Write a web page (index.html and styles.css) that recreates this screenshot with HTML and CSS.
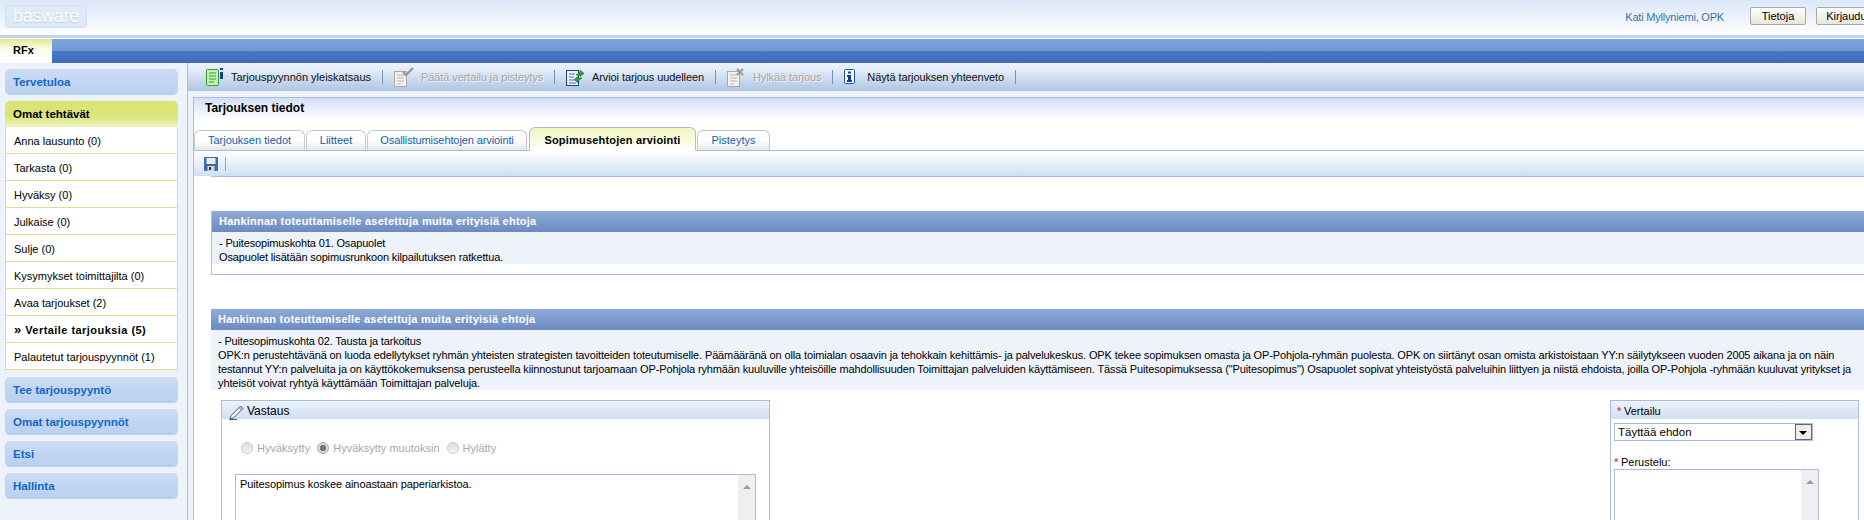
FILE: index.html
```html
<!DOCTYPE html>
<html lang="fi">
<head>
<meta charset="utf-8">
<title>RFx</title>
<link rel="stylesheet" href="styles.css">
</head>
<body>
<div class="page">
  <header class="top">
    <div class="logo"><span>basware</span></div>
    <div class="user">
      <span class="user-name">Kati Myllyniemi, OPK</span>
      <button class="btn">Tietoja</button>
      <button class="btn btn-out">Kirjaudu ulos</button>
    </div>
  </header>
  <nav class="nav"><div class="nav-tab">RFx</div></nav>
  <div class="main">
    <aside class="side">
      <div class="acc">Tervetuloa</div>
      <div class="acc-open">Omat tehtävät</div>
      <ul class="tasks">
        <li>Anna lausunto (0)</li>
        <li>Tarkasta (0)</li>
        <li>Hyväksy (0)</li>
        <li>Julkaise (0)</li>
        <li>Sulje (0)</li>
        <li>Kysymykset toimittajilta (0)</li>
        <li>Avaa tarjoukset (2)</li>
        <li class="current"><span class="chev">&#187;</span> Vertaile tarjouksia (5)</li>
        <li>Palautetut tarjouspyynnöt (1)</li>
      </ul>
      <div class="acc">Tee tarjouspyyntö</div>
      <div class="acc">Omat tarjouspyynnöt</div>
      <div class="acc">Etsi</div>
      <div class="acc">Hallinta</div>
    </aside>
    <div class="work">
      <div class="toolbar">
        <div class="tool tool-first">
          <svg width="25" height="20" viewBox="0 0 25 20"><rect x="0.5" y="2.5" width="12" height="16" rx="1" fill="#c9f0b4" stroke="#2f9b35"/><path d="M3 6h7M3 9h7M3 12h7M3 15h5" stroke="#2f9b35"/><rect x="14" y="1" width="3" height="2" fill="#1c3f8f"/><rect x="14" y="5" width="3" height="7" fill="#1c3f8f"/></svg>
          <span>Tarjouspyynnön yleiskatsaus</span>
        </div>
        <div class="tool off">
          <svg width="27" height="20" viewBox="0 0 27 20"><rect x="0.5" y="4.5" width="12" height="15" fill="#f1f1f1" stroke="#a9a9a9"/><path d="M3 8h7M3 11h7M3 14h7M3 17h4" stroke="#b5b5b5"/><path d="M9 5l3 3 7-7" fill="none" stroke="#9a9a9a" stroke-width="2.4"/></svg>
          <span>Päätä vertailu ja pisteytys</span>
        </div>
        <div class="tool">
          <svg width="26" height="20" viewBox="0 0 26 20"><rect x="0.5" y="3.5" width="12" height="15" fill="#eef3fb" stroke="#23407f"/><path d="M3 7h6M3 10h5M3 13h5M3 16h7" stroke="#4a6aa8"/><path d="M10 8l4-3V3l4 3.500-4 3V8zM16 11l-4 3v2l-4-3.500 4-3V11z" fill="#2fa52f" stroke="#14701b" stroke-width=".6"/></svg>
          <span>Arvioi tarjous uudelleen</span>
        </div>
        <div class="tool off">
          <svg width="26" height="20" viewBox="0 0 26 20"><rect x="0.5" y="4.500" width="12" height="15" fill="#f1f1f1" stroke="#a9a9a9"/><path d="M3 8h7M3 11h7M3 14h7M3 17h4" stroke="#b5b5b5"/><path d="M10 2l6 6M16 2l-6 6" stroke="#9a9a9a" stroke-width="2.200"/></svg>
          <span>Hylkää tarjous</span>
        </div>
        <div class="tool">
          <svg width="23" height="20" viewBox="0 0 23 20"><rect x="0.500" y="2.500" width="10" height="14" rx="1" fill="#f7faff" stroke="#1c4f9c"/><rect x="4" y="4.500" width="3" height="2" fill="#163e8c"/><path d="M3 8h4v5h1v2H3v-2h1v-3H3z" fill="#163e8c"/></svg>
          <span>Näytä tarjouksen yhteenveto</span>
        </div>
      </div>
      <section class="panel">
        <h1 class="panel-title">Tarjouksen tiedot</h1>
        <div class="tabs">
          <div class="tab t1">Tarjouksen tiedot</div>
          <div class="tab t2">Liitteet</div>
          <div class="tab t3">Osallistumisehtojen arviointi</div>
          <div class="tab active t4">Sopimusehtojen arviointi</div>
          <div class="tab t5">Pisteytys</div>
        </div>
        <div class="subbar">
          <svg class="save" width="14" height="14" viewBox="0 0 14 14"><rect width="14" height="14" rx="1" fill="#3f69a8"/><rect x="2.500" y="1" width="9" height="6" fill="#e8eef8"/><rect x="3.500" y="9" width="7" height="5" fill="#d5d5d5"/><rect x="5" y="10" width="2" height="3" fill="#26334f"/></svg>
        </div>
        <div class="pane">
          <div class="sec sec-one">
            <h2 class="sec-head">Hankinnan toteuttamiselle asetettuja muita erityisiä ehtoja</h2>
            <p class="sec-body">- Puitesopimuskohta 01. Osapuolet<br>Osapuolet lisätään sopimusrunkoon kilpailutuksen ratkettua.</p>
          </div>
          <div class="sec sec-two">
            <h2 class="sec-head">Hankinnan toteuttamiselle asetettuja muita erityisiä ehtoja</h2>
            <p class="sec-body">- Puitesopimuskohta 02. Tausta ja tarkoitus<br><span class="ln-a">OPK:n perustehtävänä on luoda edellytykset ryhmän yhteisten strategisten tavoitteiden toteutumiselle. Päämääränä on olla toimialan osaavin ja tehokkain kehittämis- ja palvelukeskus. OPK tekee sopimuksen omasta ja OP-Pohjola-ryhmän puolesta. OPK on siirtänyt osan omista arkistoistaan YY:n säilytykseen vuoden 2005 aikana ja on näin</span><br><span class="ln-b">testannut YY:n palveluita ja on käyttökokemuksensa perusteella kiinnostunut tarjoamaan OP-Pohjola ryhmään kuuluville yhteisöille mahdollisuuden Toimittajan palveluiden käyttämiseen. Tässä Puitesopimuksessa ("Puitesopimus") Osapuolet sopivat yhteistyöstä palveluihin liittyen ja niistä ehdoista, joilla OP-Pohjola -ryhmään kuuluvat yritykset ja</span><br><span class="ln-c">yhteisöt voivat ryhtyä käyttämään Toimittajan palveluja.</span></p>
          </div>
          <div class="answer-row">
            <div class="box box-answer">
              <div class="box-head">
                <svg width="18" height="16" viewBox="0 0 18 16"><path d="M1 15l1.200-3.500L10 3.500l2.500 2.500L4.500 14z" fill="#f4f7fc" stroke="#3d5a8c"/><path d="M10 3.500l1.500-1.500 2.500 2.500L12.500 6" fill="#b9c9e2" stroke="#3d5a8c"/><path d="M0 15.500h8" stroke="#3d5a8c"/></svg>
                <span>Vastaus</span>
              </div>
              <div class="radios">
                <label class="radio"><input type="radio" name="v" disabled>Hyväksytty</label>
                <label class="radio"><input type="radio" name="v" disabled checked>Hyväksytty muutoksin</label>
                <label class="radio"><input type="radio" name="v" disabled>Hylätty</label>
              </div>
              <div class="area area-answer">
                <div class="area-text">Puitesopimus koskee ainoastaan paperiarkistoa.</div>
                <div class="scroll"><i></i></div>
              </div>
            </div>
            <div class="box box-rate">
              <div class="box-head head-rate"><b class="req">*</b><span>Vertailu</span></div>
              <div class="select"><span>Täyttää ehdon</span><i class="select-btn"></i></div>
              <div class="field-label"><b class="req">*</b><span>Perustelu:</span></div>
              <div class="area area-rate">
                <div class="area-text"></div>
                <div class="scroll"><i></i></div>
              </div>
            </div>
          </div>
        </div>
      </section>
    </div>
  </div>
</div>
</body>
</html>
```
FILE: styles.css
```css
* { box-sizing: border-box; }
html, body { margin: 0; height: 520px; overflow: hidden; background: #fff; }
body { font: 11px/14px "Liberation Sans", Arial, sans-serif; color: #000; }
h1, h2, p, ul { margin: 0; padding: 0; }
.page { width: 1900px; height: 520px; overflow: hidden; display: flex; flex-direction: column; }

.top { height: 39px; display: flex; justify-content: space-between; padding: 5px 0 0 5px;
  background: linear-gradient(#dbe7f9 0, #fff 35px, #fff 35px, #bcd0ee 35px, #c6d6f0 38px, #fff 38px); }
.logo { width: 82px; height: 23px; border: 1px solid #d3dff2; border-radius: 3px; background: #dfe9f7;
  text-align: center; }
.logo span { font-size: 18px; line-height: 21px; color: #fff; letter-spacing: -.3px; text-shadow: 0 1px 1px #b7c9e4; }
.user { display: flex; align-items: flex-start; padding-top: 2px; }
.user-name { color: #3f6eb0; margin: 3px 26px 0 0; letter-spacing: -.2px; }
.btn { width: 56px; height: 18px; padding: 0; border: 1px solid #a8a8a8; border-radius: 2px; font: 11px "Liberation Sans", Arial, sans-serif;
  color: #000; background: linear-gradient(#fff, #e8e6d8); }
.btn-out { width: 84px; margin-left: 10px; }

.nav { height: 24px; background: linear-gradient(#7ba6de, #7099d8 50%, #4a78c6 50%, #3f6bbc); }
.nav-tab { width: 52px; height: 24px; padding: 4px 0 0 13px; font-weight: bold; background: linear-gradient(#e4e88c, #fbfce8 40%, #fff); }

.main { flex: 1; display: flex; background: #eef3fb; min-height: 0; }
.side { width: 188px; flex: none; border-right: 1px solid #a9bbdf; padding: 6px 9px 0 5px; }
.acc, .acc-open { height: 26px; margin-bottom: 6px; padding: 6px 0 0 8px; border-radius: 5px; font-size: 11.5px; font-weight: bold; color: #1266c8;
  background: linear-gradient(#cbdcf4, #b9cff0); }
.acc-open { margin: 0; color: #000; border-radius: 5px 5px 0 0; background: linear-gradient(#d9e46f, #dbe57d 60%, #eef3c0); }
.tasks { list-style: none; border: 1px solid #d8e08e; border-top: 0; margin-bottom: 7px; background: #fff; }
.tasks li { height: 27px; padding: 7px 0 0 8px; border-bottom: 1px solid #d8e08e; }
.tasks li:last-child { border-bottom: 0; height: 26px; }
.tasks .current { font-weight: bold; letter-spacing: .45px; }
.chev { font-size: 13px; }

.work { flex: 1; min-width: 0; display: flex; flex-direction: column; }
.toolbar { height: 28px; display: flex; align-items: center; background: linear-gradient(#eef3fb, #e4ecf7 25%, #aec5e3); flex: none; }
.tool { display: flex; align-items: center; padding: 0 11px; height: 14px; border-right: 1px solid #6f94c8; color: #111; white-space: nowrap; letter-spacing: -.1px; }
.tool svg { flex: none; }
.tool-first { padding-left: 18px; letter-spacing: 0; }
.off { color: #a8a8a8; text-shadow: 1px 1px 0 #eef3fb; }

.panel { flex: 1; min-height: 0; margin: 6px 0 0 5px; border: 1px solid #a9bbdf; border-right: 0; border-bottom: 0; background: #fff; }
.panel-title { height: 22px; padding: 3px 0 0 11px; font-size: 12px; font-weight: bold; line-height: 15px; background: linear-gradient(#d3e0f5, #fff); }
.tabs { display: flex; height: 31px; align-items: flex-end; padding-top: 8px; border-bottom: 1px solid #a5bde0; }
.tab { height: 21px; margin-bottom: -1px; border: 1px solid #c6c6c6; border-bottom: 1px solid #a5bde0; border-radius: 6px 6px 0 0; text-align: center; padding-top: 2px; color: #0e5fa8;
  background: linear-gradient(#fff, #fff 50%, #e6e6e6); flex: none; }
.t1 { width: 111px; }
.t2 { width: 60px; margin-left: 1px; }
.t3 { width: 160px; margin-left: 1px; letter-spacing: -.1px; }
.t4 { width: 167px; margin-left: 2px; }
.t5 { width: 73px; margin-left: 1px; }
.active { height: 24px; padding-top: 5px; border-color: #a9bbdf; border-bottom-color: #fff; color: #000; font-weight: bold; letter-spacing: .2px; background: linear-gradient(#f3f6bd, #fff); }
.subbar { height: 25px; display: flex; align-items: center; padding-left: 10px; background: linear-gradient(#fff, #cfe0f3); }
.subbar::after { content: ""; width: 1px; height: 14px; margin-left: 7px; background: #8aa6d2; }
.pane { margin-left: 17px; border-top: 1px solid #a9bbdf; padding-top: 34px; }

.sec { width: 1700px; }
.sec-head { height: 21px; padding: 3px 0 0 7px; font-size: 11px; line-height: 14px; font-weight: bold; letter-spacing: .23px; color: #fff; background: linear-gradient(#8fabd8, #6b8bc0); }
.sec-body { padding: 4px 0 0 7px; background: #eef3fb; white-space: nowrap; letter-spacing: -.15px; }
.sec-one { height: 64px; border-bottom: 1px solid #a9bbdf; border-left: 1px solid #a9bbdf; margin-bottom: 34px; }
.sec-one .sec-body { height: 32px; }
.sec-two { height: 81px; }
.sec-two .sec-body { height: 60px; }
.ln-a { letter-spacing: -.13px; }
.ln-b { letter-spacing: -.13px; }
.ln-c { letter-spacing: -.1px; }

.answer-row { width: 1638px; margin: 10px 0 0 10px; display: flex; justify-content: space-between; align-items: flex-start; }
.box { height: 130px; border: 1px solid #a9bbdf; border-bottom: 0; background: #fff; }
.box-answer { width: 549px; }
.box-rate { width: 249px; }
.box-head { height: 18px; display: flex; align-items: center; padding: 1px 0 0 7px; font-size: 12px; background: linear-gradient(#eef3fb, #cfdff2); }
.box-head svg { flex: none; margin-top: 2px; }
.head-rate { padding-left: 6px; font-size: 11px; }
.req { color: #e9506b; font-weight: bold; width: 7px; }
.radios { display: flex; align-items: center; padding: 3px 0 0 19px; color: #a8a8a8; height: 55px; }
.radio { display: flex; align-items: center; margin-right: 7px; }
.radio input { appearance: none; width: 12px; height: 12px; margin: 0 4px 0 0; border-radius: 50%; background: linear-gradient(#dedede, #f4f4f4); border: 1px solid #c8c8c8; }
.radio input:checked { background: radial-gradient(circle, #777 0 3px, #d8d8d8 3.500px); border-color: #aaa; }
.area { display: flex; border: 1px solid #a9bbdf; border-bottom: 0; height: 60px; }
.area-answer { margin: 0 0 0 13px; width: 521px; }
.area-rate { margin: 0 0 0 3px; width: 205px; }
.area-text { flex: 1; padding: 2px 4px; letter-spacing: -.1px; }
.scroll { width: 17px; background: #efefef; }
.scroll i { display: block; margin: 10px auto 0; width: 0; height: 0; border: 4px solid transparent; border-top: 0; border-bottom-color: #999; }
.select { width: 199px; height: 18px; margin: 4px 0 0 3px; display: flex; justify-content: space-between; align-items: center; border: 1px solid #a9bbdf; padding-left: 3px; font-size: 11.5px; }
.select-btn { width: 17px; height: 16px; border: 1px solid #666; background: #efefef; position: relative; }
.select-btn::after { content: ""; position: absolute; left: 3px; top: 6px; border: 4px solid transparent; border-bottom: 0; border-top-color: #000; }
.field-label { margin: 14px 0 0 3px; height: 14px; display: flex; }
```
